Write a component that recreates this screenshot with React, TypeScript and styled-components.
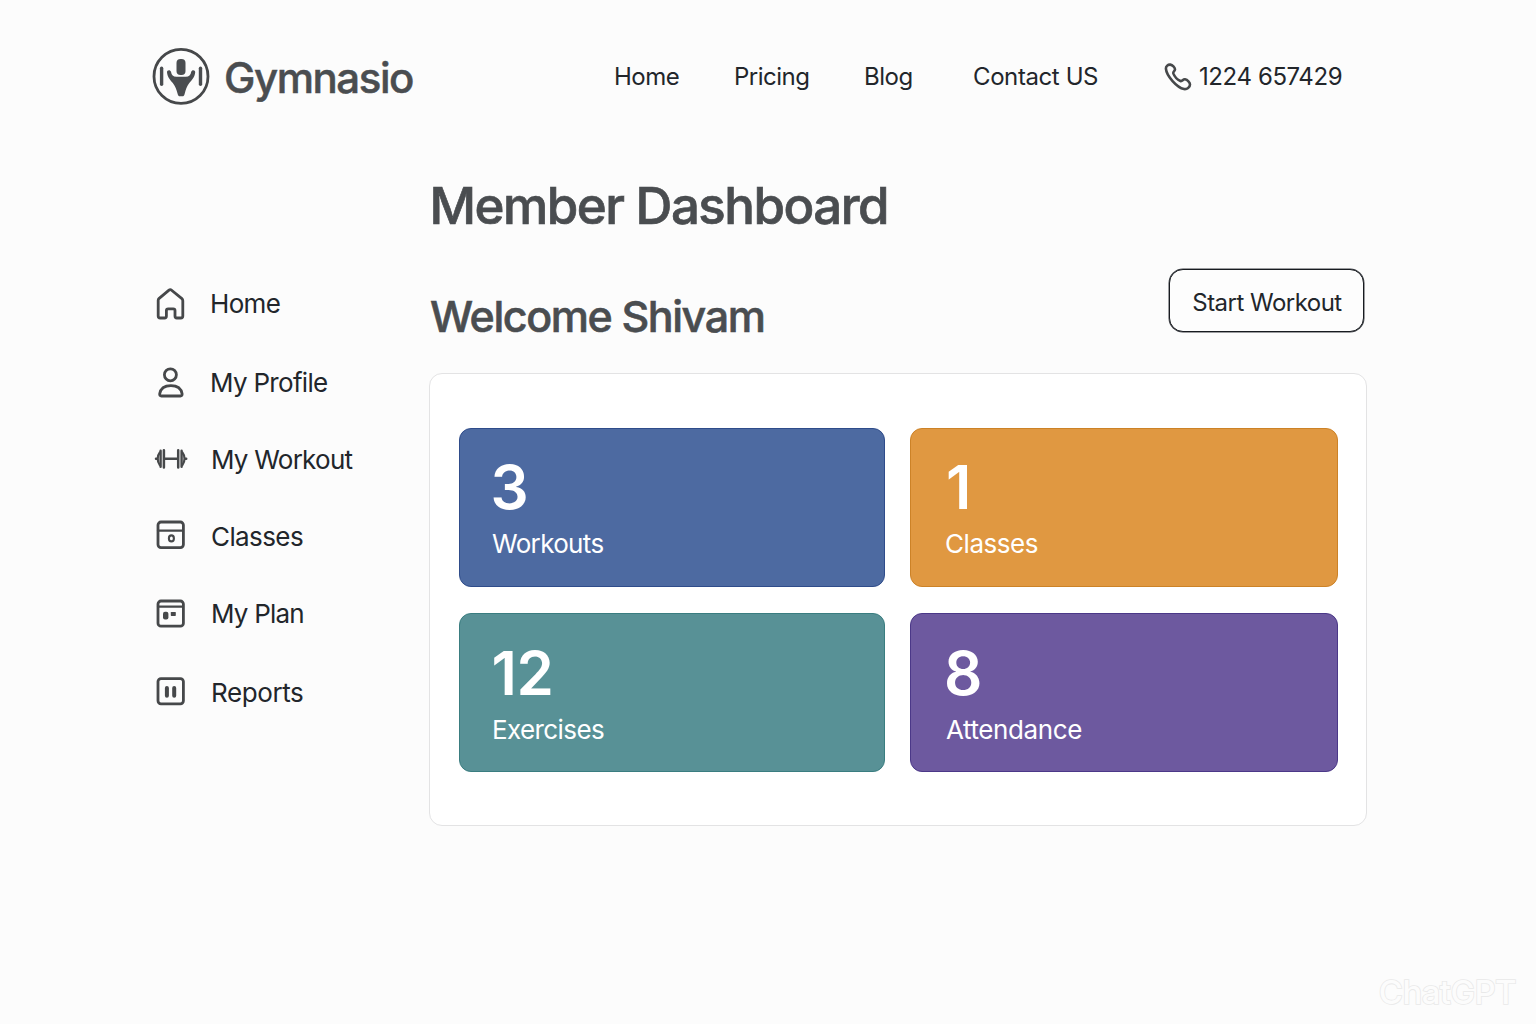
import React from "react";
import styled, { createGlobalStyle } from "styled-components";

const GlobalStyle = createGlobalStyle`
  * { box-sizing: border-box; }
  body {
    margin: 0;
    background: #fcfcfc;
    font-family: Inter, "Liberation Sans", sans-serif;
    color: #22262b;
  }
`;

const Page = styled.div`
  position: relative;
  width: 1536px;
  height: 1024px;
  padding: 46px 168px 0 151px;
  overflow: hidden;
`;

const Header = styled.header`
  display: flex;
  align-items: center;
  justify-content: space-between;
  height: 60px;
`;

const Brand = styled.div`
  display: flex;
  align-items: center;
  gap: 13px;
`;

const BrandName = styled.span`
  font-size: 42px;
  line-height: 60px;
  font-weight: 500;
  letter-spacing: -1.45px;
  color: #4a4d50;
  -webkit-text-stroke: 0.5px #4a4d50;
  padding-top: 3px;
`;

const Nav = styled.nav`
  display: grid;
  grid-template-columns: 120px 130px 109px 191px 204px;
  align-items: center;
  padding-top: 1px;
`;

const NavLink = styled.a<{ $spacing?: number }>`
  display: flex;
  align-items: center;
  gap: 7px;
  font-size: 24px;
  line-height: 30px;
  letter-spacing: ${(p) => p.$spacing ?? -0.5}px;
  white-space: nowrap;
`;

const Body = styled.div`
  display: grid;
  grid-template-columns: 278px 938px;
  padding-top: 68px;
`;

const Sidebar = styled.aside`
  display: flex;
  flex-direction: column;
  padding: 90px 0 0 4px;
`;

const SideItem = styled.a`
  display: flex;
  align-items: center;
  gap: 23px;
  height: 78px;
`;

const SideLabel = styled.span<{ $spacing: number; $trim: string }>`
  padding: ${(p) => p.$trim};
  font-size: 26px;
  line-height: 32px;
  letter-spacing: ${(p) => p.$spacing}px;
  white-space: nowrap;
`;

const Main = styled.main`
  display: flex;
  flex-direction: column;
`;

const Title = styled.h1`
  margin: 0;
  padding-left: 0.5px;
  font-size: 51px;
  line-height: 64px;
  font-weight: 500;
  letter-spacing: -1.5px;
  color: #4a4d50;
  -webkit-text-stroke: 0.7px #4a4d50;
`;

const WelcomeRow = styled.div`
  display: flex;
  align-items: flex-start;
  justify-content: space-between;
  height: 105px;
  margin-top: 30px;
  padding-right: 3px;
`;

const Welcome = styled.h2`
  margin: 0;
  padding: 20px 0 0 1px;
  font-size: 43px;
  line-height: 56px;
  font-weight: 500;
  letter-spacing: -1.42px;
  color: #4a4d50;
  -webkit-text-stroke: 0.6px #4a4d50;
`;

const StartButton = styled.button`
  width: 195px;
  height: 63px;
  margin-top: 1px;
  padding: 3px 0 0 1px;
  border: 1px solid #181b20;
  border-radius: 14px;
  box-shadow: 0 0 0 0.5px #3a3d42;
  background: #fdfdfd;
  font: 400 24px Inter, sans-serif;
  letter-spacing: -0.52px;
  color: #22262b;
`;

const Panel = styled.section`
  display: grid;
  grid-template-columns: 426px 428px;
  grid-template-rows: 159px 159px;
  gap: 26px 25px;
  height: 453px;
  padding: 54px 0 0 29px;
  border: 1px solid #e3e3e4;
  border-radius: 13px;
  background: #fff;
`;

const Card = styled.article<{ $bg: string; $edge: string; $pad: string }>`
  display: flex;
  flex-direction: column;
  padding: ${(p) => p.$pad};
  border: 1px solid ${(p) => p.$edge};
  border-radius: 12px;
  background: ${(p) => p.$bg};
  color: #fff;
`;

const Count = styled.strong<{ $shift: number }>`
  margin-left: ${(p) => p.$shift}px;
  font-size: 60px;
  line-height: 74px;
  padding-bottom: 2px;
  font-weight: 600;
  letter-spacing: -0.4px;
`;

const Label = styled.span<{ $spacing: number }>`
  font-size: 26px;
  line-height: 36px;
  letter-spacing: ${(p) => p.$spacing}px;
`;

const Watermark = styled.span`
  position: absolute;
  right: 20px;
  bottom: 12px;
  font-size: 33px;
  line-height: 40px;
  font-weight: 500;
  letter-spacing: -0.6px;
  color: #fcfcfc;
  -webkit-text-stroke: 1.6px #e9e9e9;
  paint-order: stroke;
`;

const IconSvg = styled.svg<{ $weight?: number }>`
  display: block;
  flex: none;
  overflow: visible;
  fill: none;
  stroke: #46484a;
  stroke-width: ${(p) => p.$weight ?? 2.8};
  stroke-linecap: round;
  stroke-linejoin: round;
`;

const Logo = () => (
  <IconSvg width="60" height="60" viewBox="0 0 60 60">
    <circle cx="30" cy="30.4" r="27" />
    <g fill="#4a4d50" stroke="none">
      <rect x="25.5" y="13" width="9" height="16" rx="4" />
      <rect x="8.9" y="20.5" width="3.4" height="19.5" rx="1.7" />
      <rect x="47.8" y="20.5" width="3.4" height="19.5" rx="1.7" />
      <path d="M16 26.2C15.8 23.8 19.4 23.4 20 25.8C20.5 29 22.2 30.8 25.4 30.8H34.8C38 30.8 39.7 29 40.2 25.8C40.8 23.4 44.4 23.8 44.2 26.2C43.8 31.5 40.5 34.2 38.3 37C35.8 40.3 34.8 43.5 33.7 47.8C33.2 49.7 32.6 50.3 31.3 50.3H29C27.7 50.3 27.1 49.7 26.6 47.8C25.5 43.5 24.3 40.3 21.8 37C19.6 34.2 16.4 31.5 16 26.2Z" />
    </g>
  </IconSvg>
);

const PhoneIcon = () => (
  <IconSvg width="28" height="28" viewBox="0 0 28 28" $weight={2.6}>
    <path d="M1.9 5.6C1.8 3.2 4 1.4 6.3 1.6C8.5 2 10.9 4.5 11 6.4C11.1 8 8.8 8.5 9.3 10.4C10.3 13 13.5 16.7 16.5 18C18.4 18.7 18.8 16 21 16.3C23.5 16.8 26 19.4 26 21.4C26 24 23 26.6 20 26C13 24.5 2.5 13 1.9 5.6Z" />
  </IconSvg>
);

const icons = {
  home: (
    <path d="M3.9 11.6L14 3.2Q15.3 2.1 16.6 3.2L26.9 11.6Q27.8 12.4 27.8 13.8V29Q27.8 31 25.8 31H21.8Q20 31 20 29V23.5Q20 21.8 18.2 21.8H13.2Q11.4 21.8 11.4 23.5V29Q11.4 31 9.6 31H5.2Q3.2 31 3.2 29V13.5Q3.2 12.2 3.9 11.6Z" />
  ),
  profile: (
    <>
      <circle cx="15.4" cy="9.8" r="6" />
      <path d="M6.4 31Q4.4 31 4.7 28.8C5.6 23.4 9.8 20.6 15.9 20.6C22 20.6 26.2 23.4 27.1 28.8Q27.4 31 25.4 31Z" />
    </>
  ),
  workout: (
    <>
      <path d="M8.9 7.2V24.6M23.2 7.2V24.6M9 15.8H23M1 15.8H2.2M30.2 15.8H31.2" strokeWidth="2.5" />
      <path d="M5.6 7.8V23.8M26.6 7.8V23.8" strokeWidth="2.4" />
      <path d="M4.8 9.5C2 13 2 18.5 4.8 22M27.4 9.5C30.2 13 30.2 18.5 27.4 22" strokeWidth="2.2" />
    </>
  ),
  classes: (
    <>
      <rect x="3" y="1" width="25.4" height="25.6" rx="3" />
      <path d="M3 9.6H28" strokeWidth="2.3" />
      <ellipse cx="16.4" cy="17.4" rx="2.5" ry="3" strokeWidth="2.1" />
    </>
  ),
  plan: (
    <>
      <rect x="3" y="2" width="25.4" height="25.2" rx="3" />
      <path d="M3 7.6H28" strokeWidth="2.2" />
      <rect x="8" y="12.8" width="5.4" height="7.8" rx="2" fill="#46484a" stroke="none" />
      <rect x="15.8" y="12.9" width="5" height="4" rx="0.6" fill="#46484a" stroke="none" />
    </>
  ),
  reports: (
    <>
      <rect x="3" y="1.6" width="25.4" height="25.2" rx="3" />
      <path d="M11.9 10.9V18.8M19.2 10.9V18.8" strokeWidth="4" />
    </>
  ),
};

const sideItems: { icon: keyof typeof icons; label: string; spacing: number; trim: string }[] = [
  { icon: "home", label: "Home", spacing: -0.65, trim: "2px 0 0" },
  { icon: "profile", label: "My Profile", spacing: -0.7, trim: "4px 0 0" },
  { icon: "workout", label: "My Workout", spacing: -0.75, trim: "2px 0 0 1px" },
  { icon: "classes", label: "Classes", spacing: -0.6, trim: "0 0 0 1px" },
  { icon: "plan", label: "My Plan", spacing: -0.8, trim: "0 0 2px 1px" },
  { icon: "reports", label: "Reports", spacing: -0.4, trim: "0 0 0 1px" },
];

const cards = [
  { count: "3", label: "Workouts", bg: "#4d6aa1", edge: "#2f4c8a", pad: "21px 0 0 32px", spacing: -0.65, shift: -1.5 },
  { count: "1", label: "Classes", bg: "#e09841", edge: "#cc8227", pad: "21px 0 0 34px", spacing: -0.45, shift: 1 },
  { count: "12", label: "Exercises", bg: "#589196", edge: "#3a7d80", pad: "22px 0 0 32px", spacing: -0.6, shift: -0.5 },
  { count: "8", label: "Attendance", bg: "#6d599f", edge: "#4b3888", pad: "22px 0 0 35px", spacing: -0.4, shift: -2 },
];

export default function App() {
  return (
    <Page>
      <GlobalStyle />
      <Header>
        <Brand>
          <Logo />
          <BrandName>Gymnasio</BrandName>
        </Brand>
        <Nav>
          <NavLink>Home</NavLink>
          <NavLink>Pricing</NavLink>
          <NavLink>Blog</NavLink>
          <NavLink $spacing={-0.4}>Contact US</NavLink>
          <NavLink $spacing={-0.4}>
            <PhoneIcon />
            1224 657429
          </NavLink>
        </Nav>
      </Header>
      <Body>
        <Sidebar>
          {sideItems.map((item) => (
            <SideItem key={item.label}>
              <IconSvg width="32" height="32" viewBox="0 0 32 32">
                {icons[item.icon]}
              </IconSvg>
              <SideLabel $spacing={item.spacing} $trim={item.trim}>
                {item.label}
              </SideLabel>
            </SideItem>
          ))}
        </Sidebar>
        <Main>
          <Title>Member Dashboard</Title>
          <WelcomeRow>
            <Welcome>Welcome Shivam</Welcome>
            <StartButton>Start Workout</StartButton>
          </WelcomeRow>
          <Panel>
            {cards.map((card) => (
              <Card key={card.label} $bg={card.bg} $edge={card.edge} $pad={card.pad}>
                <Count $shift={card.shift}>{card.count}</Count>
                <Label $spacing={card.spacing}>{card.label}</Label>
              </Card>
            ))}
          </Panel>
        </Main>
      </Body>
      <Watermark>ChatGPT</Watermark>
    </Page>
  );
}
